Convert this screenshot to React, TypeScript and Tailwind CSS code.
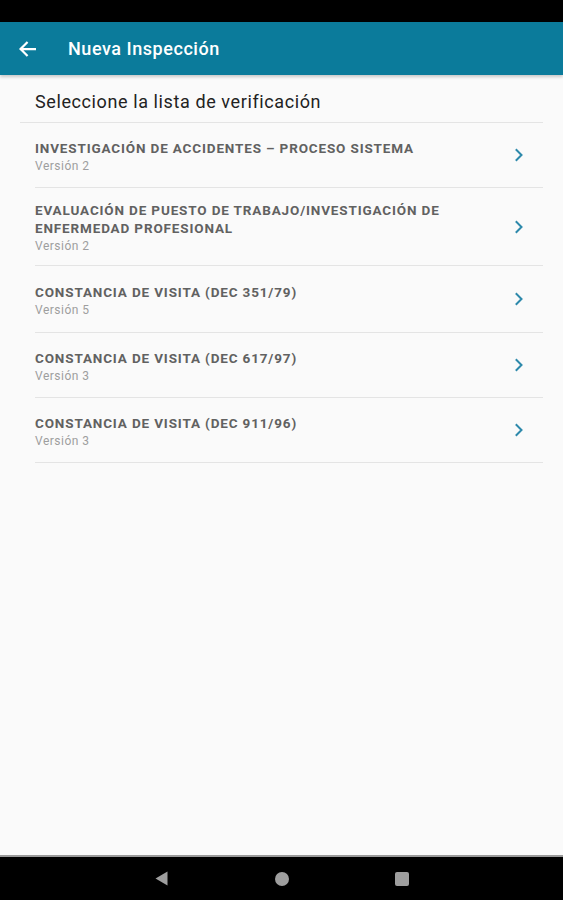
import React from "react";

const items = [
  { title: ["INVESTIGACIÓN DE ACCIDENTES – PROCESO SISTEMA"], version: "Versión 2", h: "h-[65px]" },
  { title: ["EVALUACIÓN DE PUESTO DE TRABAJO/INVESTIGACIÓN DE", "ENFERMEDAD PROFESIONAL"], version: "Versión 2", h: "h-[78px]" },
  { title: ["CONSTANCIA DE VISITA (DEC 351/79)"], version: "Versión 5", h: "h-[67px]" },
  { title: ["CONSTANCIA DE VISITA (DEC 617/97)"], version: "Versión 3", h: "h-[65px]" },
  { title: ["CONSTANCIA DE VISITA (DEC 911/96)"], version: "Versión 3", h: "h-[65px]" },
];

function Chevron() {
  return (
    <svg width="10" height="14" viewBox="0 0 10 14" fill="none">
      <path d="M2.5 2 L7.5 7 L2.5 12" stroke="#2d89ab" strokeWidth="2" strokeLinecap="square" />
    </svg>
  );
}

export default function App() {
  return (
    <div
      className="w-[563px] h-[900px] flex flex-col bg-[#fafafa] overflow-hidden"
      style={{ fontFamily: "Roboto, 'Noto Sans', sans-serif" }}
    >
      <div className="h-[22px] bg-black shrink-0" />
      <div className="h-[53px] bg-[#0b7b9b] shrink-0 flex items-center shadow-[0_2px_3px_rgba(0,0,0,0.2)]">
        <div className="w-[68px] flex items-center pl-[18px]">
          <svg width="18" height="18" viewBox="0 0 16 16" fill="none">
            <path d="M16 8H2.5M8.5 1.8L2.3 8l6.2 6.2" stroke="white" strokeWidth="2" />
          </svg>
        </div>
        <span className="text-white text-[18px] font-medium tracking-[0.55px]">Nueva Inspección</span>
      </div>
      <div className="flex-1 flex flex-col pl-[35px] pr-[20px]">
        <div className="h-[48px] flex items-end pb-[11px] border-b border-[#e4e4e4] -ml-[15px] pl-[15px]">
          <span className="text-[18px] text-[#222] leading-none tracking-[0.6px]">Seleccione la lista de verificación</span>
        </div>
        {items.map((it, i) => (
          <div key={i} className={`flex items-center border-b border-[#e4e4e4] ${it.h}`}>
            <div className="flex-1 flex flex-col pt-[3px]">
              {it.title.map((t, j) => (
                <span key={j} className="text-[13.5px] font-bold text-[#616161] leading-[18px] tracking-[0.85px]">
                  {t}
                </span>
              ))}
              <span className="text-[12px] text-[#9e9e9e] leading-[18px] tracking-[0.5px]">{it.version}</span>
            </div>
            <div className="w-[30px] flex justify-start pl-[1px]">
              <Chevron />
            </div>
          </div>
        ))}
      </div>
      <div className="h-[45px] bg-black shrink-0 border-t-2 border-[#9a9a9a] flex items-center">
        <div className="w-[155px]" />
        <svg width="13" height="15" viewBox="0 0 13 15">
          <path d="M12.5 0.5 L0.5 7.5 L12.5 14.5 Z" fill="#9e9e9e" />
        </svg>
        <div className="w-[107px]" />
        <div className="w-[14px] h-[14px] rounded-full bg-[#9e9e9e]" />
        <div className="w-[106px]" />
        <div className="w-[14px] h-[14px] rounded-[2px] bg-[#9e9e9e]" />
      </div>
    </div>
  );
}
